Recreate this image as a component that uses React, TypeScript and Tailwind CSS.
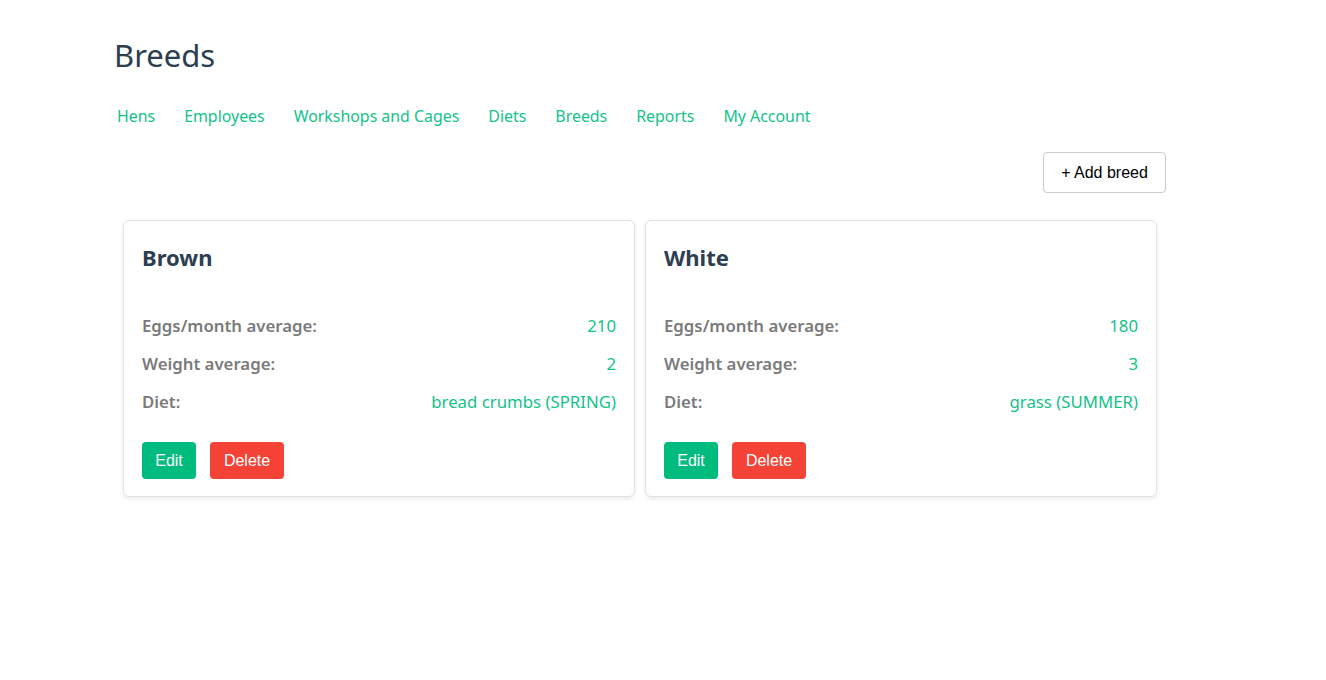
import React from 'react';

interface Breed {
  name: string;
  eggs: number;
  weight: number;
  diet: string;
}

const breeds: Breed[] = [
  { name: 'Brown', eggs: 210, weight: 2, diet: 'bread crumbs (SPRING)' },
  { name: 'White', eggs: 180, weight: 3, diet: 'grass (SUMMER)' },
];

const links = ['Hens', 'Employees', 'Workshops and Cages', 'Diets', 'Breeds', 'Reports', 'My Account'];

function BreedCard({ breed }: { breed: Breed }) {
  const rows: [string, string][] = [
    ['Eggs/month average:', String(breed.eggs)],
    ['Weight average:', String(breed.weight)],
    ['Diet:', breed.diet],
  ];
  return (
    <div className="w-[512px] h-[277px] rounded-[6px] border border-[#e2e2e2] bg-white px-[18px] pt-[20px] shadow-[0_2px_4px_rgba(0,0,0,0.08)]">
      <h2 className="text-[22px] leading-[32px] font-bold text-[#2c3e50]">{breed.name}</h2>
      <div className="mt-[40px] flex flex-col gap-[12px]">
        {rows.map(([label, value]) => (
          <div key={label} className="flex justify-between text-[16.8px] leading-[26px]">
            <span className="font-semibold text-[#7a7a7a]">{label}</span>
            <span className="text-[#13c28a]">{value}</span>
          </div>
        ))}
      </div>
      <div className="mt-[27px] flex gap-[14px] font-['Liberation_Sans',Arial,sans-serif] text-[16px]">
        <button className="h-[37px] w-[54px] rounded-[4px] bg-[#00bb7e] text-white">Edit</button>
        <button className="h-[37px] w-[74px] rounded-[4px] bg-[#f44336] text-white">Delete</button>
      </div>
    </div>
  );
}

export default function App() {
  return (
    <div className="min-h-screen bg-white font-['Noto_Sans',sans-serif]">
      <div className="mx-auto w-[1098px] pt-[33px]">
        <h1 className="text-[31px] leading-[44px] text-[#2c3e50]">Breeds</h1>
        <nav className="mt-[26px] flex gap-[29px] pl-[3px]">
          {links.map((l) => (
            <a key={l} href="#" className="text-[15.9px] leading-[26px] text-[#13c28a]">
              {l}
            </a>
          ))}
        </nav>
        <div className="mt-[23px] flex justify-end pr-[46px]">
          <button className="h-[41px] w-[123px] rounded-[4px] border border-[#cccccc] bg-white font-['Liberation_Sans',Arial,sans-serif] text-[16px] text-black">
            + Add breed
          </button>
        </div>
        <div className="mt-[27px] flex gap-[10px] pl-[9px]">
          {breeds.map((b) => (
            <BreedCard key={b.name} breed={b} />
          ))}
        </div>
      </div>
    </div>
  );
}
